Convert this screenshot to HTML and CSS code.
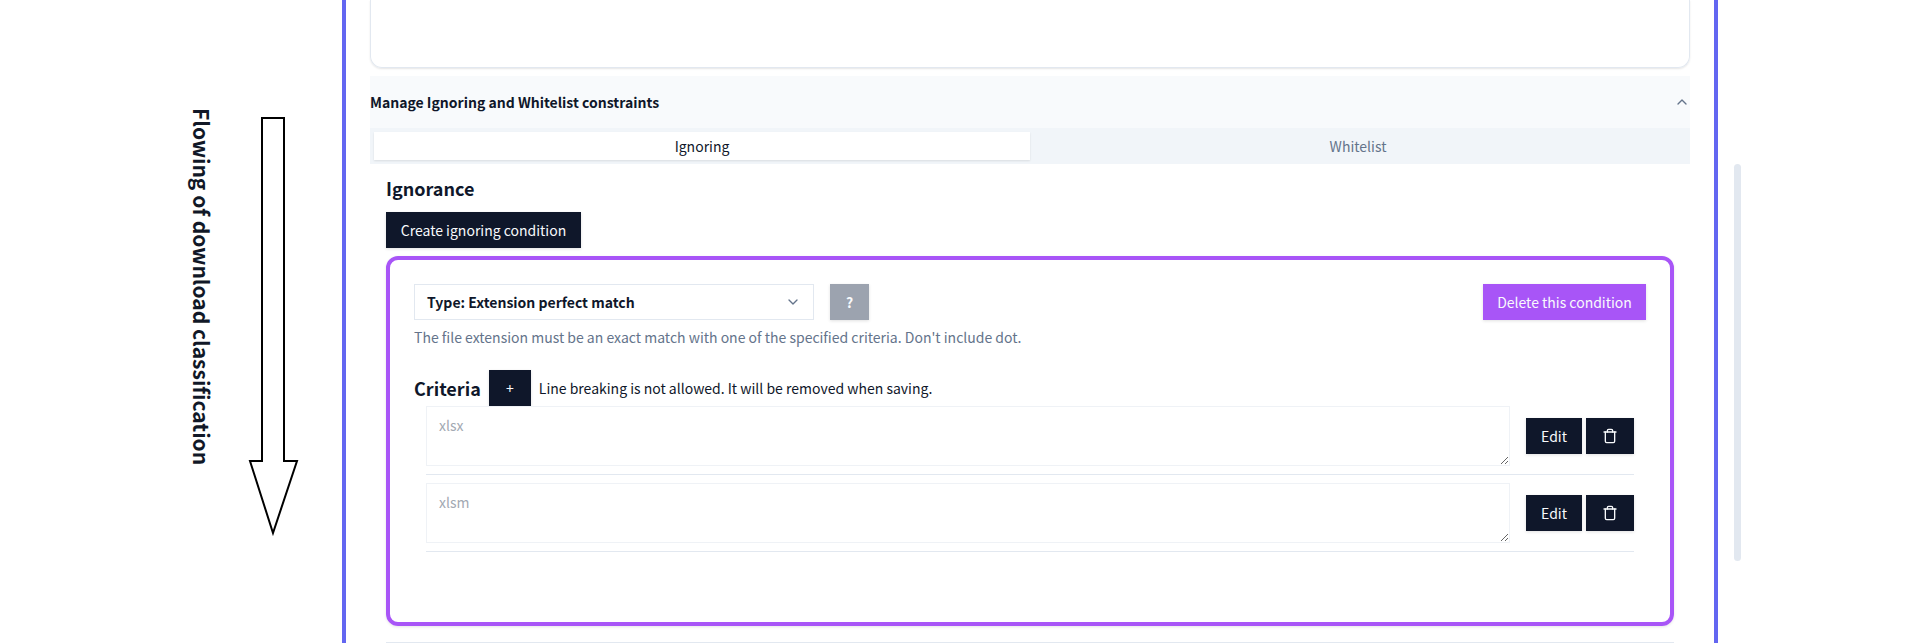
FILE: index.html
```html
<!DOCTYPE html>
<html lang="en">
<head>
<meta charset="utf-8">
<title>Manage Ignoring and Whitelist constraints</title>
<link rel="stylesheet" href="styles.css">
</head>
<body>
<div class="page">
  <div class="annotation">Flowing of download classification</div>
  <svg class="flow-arrow" width="51" height="419" viewBox="0 0 51 419" aria-hidden="true">
    <path d="M14 1H36V344H49L25 416L2 344H14Z" fill="#fff" stroke="#000" stroke-width="2"/>
  </svg>
  <main class="panel">
    <div class="top-card"></div>
    <section class="accordion">
      <div class="accordion-head">
        <span>Manage Ignoring and Whitelist constraints</span>
        <svg class="chev" width="16" height="16" viewBox="0 0 24 24"><path d="m18 15-6-6-6 6"/></svg>
      </div>
      <div class="tabs">
        <div class="tab tab-active">Ignoring</div>
        <div class="tab">Whitelist</div>
      </div>
      <div class="content">
        <h2 class="heading">Ignorance</h2>
        <button class="btn btn-create">Create ignoring condition</button>
        <div class="condition">
          <div class="type-row">
            <div class="select">
              <span>Type: Extension perfect match</span>
              <svg class="chev" width="16" height="16" viewBox="0 0 24 24"><path d="m6 9 6 6 6-6"/></svg>
            </div>
            <button class="btn btn-help">?</button>
            <button class="btn btn-delete">Delete this condition</button>
          </div>
          <p class="desc">The file extension must be an exact match with one of the specified criteria. Don't include dot.</p>
          <div class="criteria-head">
            <h3 class="heading">Criteria</h3>
            <button class="btn btn-add">+</button>
            <span class="note">Line breaking is not allowed. It will be removed when saving.</span>
          </div>
          <div class="row">
            <textarea class="area" placeholder="xlsx"></textarea>
            <button class="btn btn-edit">Edit</button>
            <button class="btn btn-trash">
              <svg width="16" height="16" viewBox="0 0 24 24"><path d="M3 6h18"/><path d="M19 6v14c0 1-1 2-2 2H7c-1 0-2-1-2-2V6"/><path d="M8 6V4c0-1 1-2 2-2h4c1 0 2 1 2 2v2"/></svg>
            </button>
          </div>
          <div class="row">
            <textarea class="area" placeholder="xlsm"></textarea>
            <button class="btn btn-edit">Edit</button>
            <button class="btn btn-trash">
              <svg width="16" height="16" viewBox="0 0 24 24"><path d="M3 6h18"/><path d="M19 6v14c0 1-1 2-2 2H7c-1 0-2-1-2-2V6"/><path d="M8 6V4c0-1 1-2 2-2h4c1 0 2 1 2 2v2"/></svg>
            </button>
          </div>
        </div>
        <div class="next-sep"></div>
      </div>
    </section>
  </main>
  <div class="scrollbar"></div>
</div>
</body>
</html>
```

FILE: styles.css
```css
* { box-sizing: border-box; }
html, body { margin: 0; padding: 0; background: #fff; }
body {
  font-family: "Noto Sans CJK KR", "Noto Sans", sans-serif;
  color: #0f172a;
  font-size: 14px;
}
.page {
  position: relative;
  width: 1918px;
  height: 643px;
  overflow: hidden;
}
.annotation {
  position: absolute;
  left: 189px;
  top: 108px;
  writing-mode: vertical-rl;
  font-family: "Noto Sans CJK KR", sans-serif;
  font-size: 21px;
  line-height: 26px;
  font-weight: 700;
  color: #111827;
  white-space: nowrap;
}
.flow-arrow { position: absolute; left: 248px; top: 117px; }
.scrollbar {
  position: absolute;
  left: 1734px;
  top: 164px;
  width: 7px;
  height: 397px;
  border-radius: 4px;
  background: #e2e8f0;
}
.panel {
  margin-left: 342px;
  width: 1376px;
  height: 643px;
  border-left: 4px solid #6366f1;
  border-right: 4px solid #6366f1;
  padding: 0 24px;
}
.top-card {
  height: 68px;
  margin-bottom: 8px;
  border: 1px solid #e2e8f0;
  border-top: 0;
  border-radius: 0 0 12px 12px;
  box-shadow: 0 1px 2px rgba(0, 0, 0, .1);
}
.accordion-head {
  display: flex;
  align-items: center;
  justify-content: space-between;
  height: 52px;
  background: #f8fafc;
  font-weight: 600;
}
.chev { fill: none; stroke: #64748b; stroke-width: 2; stroke-linecap: round; stroke-linejoin: round; flex: none; }
.tabs {
  display: grid;
  grid-template-columns: 1fr 1fr;
  height: 36px;
  padding: 4px;
  background: #f1f5f9;
}
.tab {
  display: flex;
  align-items: center;
  justify-content: center;
  color: #64748b;
}
.tab-active {
  background: #fff;
  color: #0f172a;
  box-shadow: 0 1px 2px rgba(0, 0, 0, .1);
}
.content { padding: 10px 16px 0; }
.heading {
  margin: 0;
  font-size: 18px;
  line-height: 28px;
  font-weight: 600;
}
.btn {
  display: inline-flex;
  align-items: center;
  justify-content: center;
  height: 36px;
  padding: 0;
  border: 0;
  font-family: inherit;
  font-size: 14px;
  color: #f8fafc;
  background: #0f172a;
  box-shadow: 0 1px 3px rgba(0, 0, 0, .12);
}
.btn-create { width: 195px; margin-top: 10px; display: flex; }
.condition {
  height: 370px;
  margin-top: 8px;
  padding: 24px;
  border: 4px solid #a855f7;
  border-radius: 12px;
  box-shadow: 0 1px 3px rgba(0, 0, 0, .1);
}
.type-row { display: flex; align-items: center; }
.select {
  display: flex;
  align-items: center;
  justify-content: space-between;
  width: 400px;
  height: 36px;
  padding: 0 12px;
  border: 1px solid #e2e8f0;
  font-weight: 600;
}
.btn-help { width: 39px; margin-left: 16px; background: #9ca3af; font-weight: 700; }
.btn-delete { width: 163px; margin-left: auto; background: #a855f7; }
.desc { margin: 7px 0 0; line-height: 20px; color: #64748b; }
.criteria-head { display: flex; align-items: center; margin-top: 23px; height: 36px; }
.btn-add { width: 42px; margin-left: 8px; }
.note { margin-left: 8px; }
.row {
  display: flex;
  align-items: center;
  gap: 4px;
  margin: 0 12px;
  padding-bottom: 8px;
  margin-bottom: 8px;
  border-bottom: 1px solid #e2e8f0;
}
.area {
  display: block;
  flex: none;
  width: 1084px;
  height: 60px;
  margin-right: 12px;
  padding: 8px 12px;
  border: 1px solid #eff2f6;
  outline: 0;
  font-family: inherit;
  font-size: 14px;
  line-height: 20px;
  background: #fff;
}
.area::placeholder { color: #a3a9b3; opacity: 1; }
.btn-edit { width: 56px; }
.btn-trash { width: 48px; }
.btn-trash svg { fill: none; stroke: #f8fafc; stroke-width: 2; stroke-linecap: round; stroke-linejoin: round; }
.next-sep { margin-top: 16px; border-top: 1px solid #e2e8f0; }
```
